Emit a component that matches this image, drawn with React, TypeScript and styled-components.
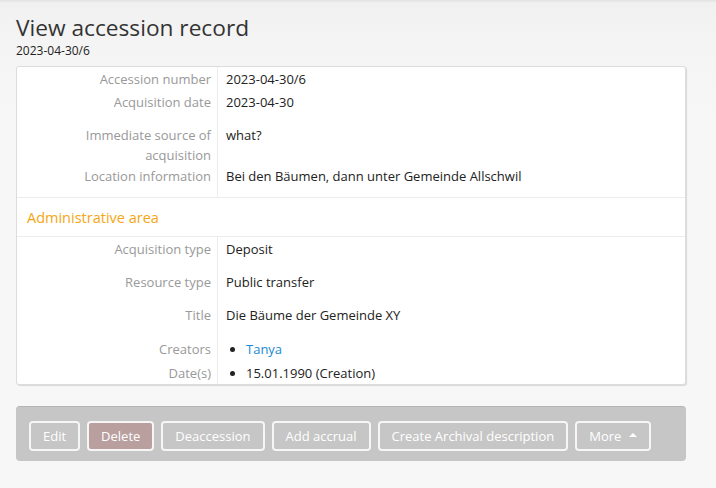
import React from "react";
import styled, { createGlobalStyle } from "styled-components";

const Global = createGlobalStyle`
  html, body { margin: 0; padding: 0; }
  body {
    background: #f7f7f7;
    font-family: "Open Sans", "Liberation Sans", sans-serif;
    color: #333;
  }
`;

const Page = styled.div`
  min-height: 488px;
  padding: 14px 30px 20px 16px;
  box-sizing: border-box;
  background: linear-gradient(to bottom, #e2e2e2 0px, #f1f1f1 3px, #f4f4f4 40px, #f7f7f7 120px);
  width: 716px;
`;

const Title = styled.h1`
  margin: 0 0 3px;
  font-size: 22.7px;
  font-weight: 400;
  line-height: 27px;
  color: #333;
`;

const Sub = styled.div`
  font-size: 12px;
  line-height: 14px;
  color: #222;
`;

const Card = styled.div`
  margin-top: 8px;
  width: 670px;
  box-sizing: border-box;
  background: #fff;
  border: 1px solid #dcdcdc;
  border-radius: 3px;
  box-shadow: 1px 1px 1px rgba(0, 0, 0, 0.12);
`;

const Section = styled.div<{ $pb: number }>`
  display: grid;
  grid-template-columns: 200px 1fr;
  padding-bottom: ${(p) => p.$pb}px;
  background: linear-gradient(to right, transparent 200px, #ececec 200px, #ececec 201px, transparent 201px);
`;

const Label = styled.div<{ $top: number }>`
  padding-top: ${(p) => p.$top}px;
  padding-right: 6px;
  text-align: right;
  font-size: 13px;
  line-height: 20px;
  color: #999;
`;

const Value = styled.div<{ $top: number }>`
  padding-top: ${(p) => p.$top}px;
  padding-left: 9px;
  font-size: 13px;
  line-height: 20px;
  color: #222;
`;

const AreaHeader = styled.div`
  border-top: 1px solid #ececec;
  border-bottom: 1px solid #ececec;
  height: 38px;
  display: flex;
  align-items: center;
  padding-left: 10px;
  font-size: 14.5px;
  color: #f5a614;
`;

const List = styled.ul`
  margin: 0;
  padding-left: 20px;
  list-style: disc;
`;

const Link = styled.a`
  color: #1a8ad4;
  text-decoration: none;
`;

const Actions = styled.div`
  margin-top: 21px;
  width: 670px;
  box-sizing: border-box;
  background: #c6c6c6;
  border-top: 1px solid #b5b5b5;
  border-radius: 4px;
  padding: 14px 13px 10px;
  display: flex;
  gap: 7px;
`;

const Btn = styled.button<{ $danger?: boolean }>`
  flex-shrink: 0;
  white-space: nowrap;
  height: 30px;
  box-sizing: border-box;
  padding: 0 12px;
  border: 2px solid #f6f6f6;
  border-radius: 4px;
  background: ${(p) => (p.$danger ? "#b9a09f" : "transparent")};
  color: #ffffff;
  font-family: "Open Sans", "Liberation Sans", sans-serif;
  font-size: 13px;
  display: inline-flex;
  align-items: center;
  gap: 8px;
  cursor: pointer;
`;

const Caret = styled.span`
  width: 0;
  height: 0;
  border-left: 4px solid transparent;
  border-right: 4px solid transparent;
  border-bottom: 4px solid #ffffff;
  margin-top: -2px;
`;

type Row = { label: React.ReactNode; value: React.ReactNode; top: number };

const top: Row[] = [
  { label: "Accession number", value: "2023-04-30/6", top: 2 },
  { label: "Acquisition date", value: "2023-04-30", top: 3 },
  { label: <>Immediate source of<br />acquisition</>, value: "what?", top: 13 },
  { label: "Location information", value: "Bei den Bäumen, dann unter Gemeinde Allschwil", top: 1 },
];

const bottom: Row[] = [
  { label: "Acquisition type", value: "Deposit", top: 2 },
  { label: "Resource type", value: "Public transfer", top: 13 },
  { label: "Title", value: "Die Bäume der Gemeinde XY", top: 13 },
  {
    label: "Creators",
    value: (
      <List>
        <li><Link href="#">Tanya</Link></li>
      </List>
    ),
    top: 14,
  },
  {
    label: "Date(s)",
    value: (
      <List>
        <li>15.01.1990 (Creation)</li>
      </List>
    ),
    top: 4,
  },
];

const renderRows = (rows: Row[]) =>
  rows.map((r, i) => (
    <React.Fragment key={i}>
      <Label $top={r.top}>{r.label}</Label>
      <Value $top={r.top}>{r.value}</Value>
    </React.Fragment>
  ));

export default function App() {
  return (
    <>
      <Global />
      <Page>
        <Title>View accession record</Title>
        <Sub>2023-04-30/6</Sub>
        <Card>
          <Section $pb={11}>{renderRows(top)}</Section>
          <AreaHeader>Administrative area</AreaHeader>
          <Section $pb={1}>{renderRows(bottom)}</Section>
        </Card>
        <Actions>
          <Btn>Edit</Btn>
          <Btn $danger>Delete</Btn>
          <Btn>Deaccession</Btn>
          <Btn>Add accrual</Btn>
          <Btn>Create Archival description</Btn>
          <Btn>
            More <Caret />
          </Btn>
        </Actions>
      </Page>
    </>
  );
}
